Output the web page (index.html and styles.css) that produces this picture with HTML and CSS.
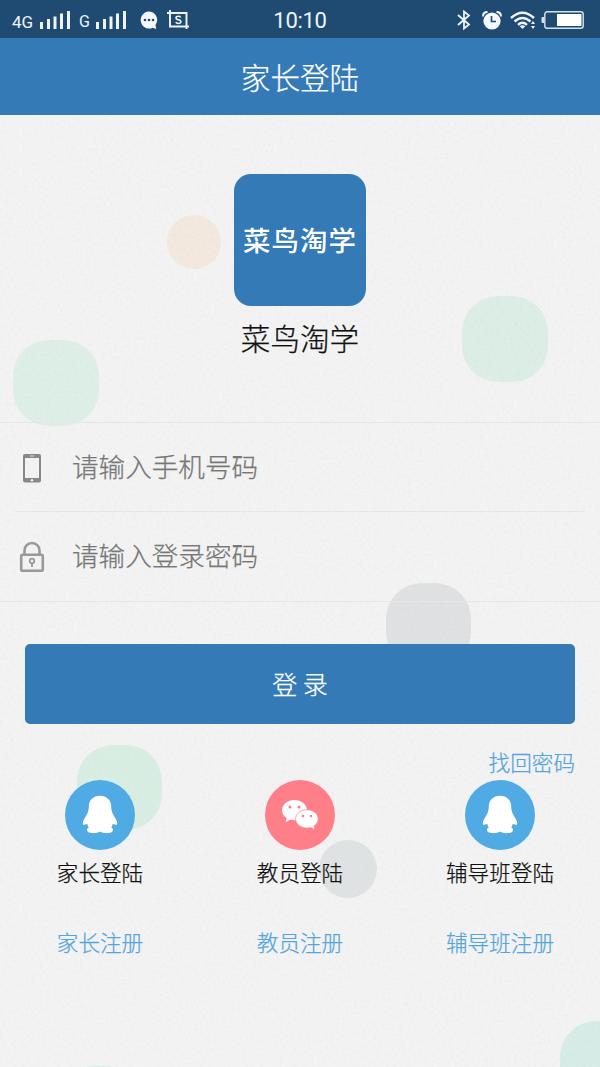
FILE: index.html
```
<!DOCTYPE html>
<html lang="zh-CN">
<head>
<meta charset="utf-8">
<title>家长登陆</title>
<link rel="stylesheet" href="styles.css">
</head>
<body>
<svg class="backdrop" width="600" height="1067" viewBox="0 0 600 1067" aria-hidden="true">
  <defs>
    <filter id="paper" x="0" y="0" width="100%" height="100%">
      <feTurbulence type="fractalNoise" baseFrequency="0.35" numOctaves="2" seed="4"/>
      <feColorMatrix values="0 0 0 0 0.45  0 0 0 0 0.45  0 0 0 0 0.45  0.16 0 0 0 -0.065"/>
    </filter>
  </defs>
  <circle cx="194" cy="242" r="27" fill="#f3e9de"/>
  <rect x="462" y="296" width="86" height="86" rx="36" fill="#dceee6"/>
  <rect x="13" y="340" width="86" height="86" rx="36" fill="#deefe7"/>
  <rect x="386" y="583" width="85" height="85" rx="36" fill="#dfe1e3"/>
  <rect x="77" y="745" width="85" height="85" rx="36" fill="#d9eee2"/>
  <circle cx="348" cy="869" r="29" fill="#e0e3e3"/>
  <rect x="560" y="1021" width="86" height="86" rx="36" fill="#d7ece7"/>
  <rect x="57" y="1066" width="86" height="86" rx="38" fill="#d5ede4"/>
  <rect width="600" height="1067" filter="url(#paper)"/>
</svg>
<div class="screen">
  <div class="status">
    <div class="status-left">
      <span class="net">4G</span>
      <svg class="bars" width="31" height="19" viewBox="0 0 31 19" fill="#eef4fa"><path d="M0 12h3v7H0zM7 9h3v10H7zM13.500 6.500h3V19h-3zM20 3.500h3V19h-3zM27 1h3v18h-3z"/></svg>
      <span class="net net-g">G</span>
      <svg class="bars" width="31" height="19" viewBox="0 0 31 19" fill="#eef4fa"><path d="M0 12h3v7H0zM7 9h3v10H7zM13.500 6.500h3V19h-3zM20 3.500h3V19h-3zM27 1h3v18h-3z"/></svg>
      <svg class="chat" width="18" height="19" viewBox="0 0 18 19"><path d="M9 .5a8.500 8.500 0 1 0 3.800 16.200L16.200 18l-.7-4A8.500 8.500 0 0 0 9 .5z" fill="#f4f8fc"/><g fill="#1f4b73"><circle cx="5" cy="9" r="1.300"/><circle cx="9" cy="9" r="1.300"/><circle cx="13" cy="9" r="1.300"/></g></svg>
      <svg class="crop" width="22" height="20" viewBox="0 0 22 20" fill="none" stroke="#eef4fa" stroke-width="1.900"><path d="M0 3h19.500v16M3 0v16.500h19"/><path d="M13.700 7.300C13.200 6.500 12.400 6.200 11.400 6.200c-3.200 0-3.200 3.200 0 3.600 3.300.4 3.200 3.700 0 3.700-1.200 0-2.200-.5-2.600-1.500" stroke-width="1.600"/></svg>
    </div>
    <div class="clock">10:10</div>
    <div class="status-right">
      <svg width="14" height="20" viewBox="0 0 14 20" fill="none" stroke="#eef4fa" stroke-width="1.800"><path d="M1 5l11 9.500-5 4V1.500l5 4L1 15"/></svg>
      <svg class="alarm" width="20" height="19" viewBox="0 0 20 19"><circle cx="10" cy="10" r="8.600" fill="#f4f8fc"/><path d="M1 5.500C1 2.500 3 1 5.500 1M19 5.500C19 2.500 17 1 14.500 1" stroke="#f4f8fc" stroke-width="1.900" fill="none"/><path d="M9.500 5v5.500H14" fill="none" stroke="#1f4b73" stroke-width="1.600"/></svg>
      <svg class="wifi" width="27" height="19" viewBox="0 0 27 19" fill="none" stroke="#eef4fa" stroke-width="2.400"><path d="M1 7Q12.500-3.500 24 7M4.500 10.500q8-7 16 0M8 13.800q4.500-4 9 0"/><path d="M9.700 15.200q2.800-2 5.600 0L12.500 18z" fill="#eef4fa" stroke="none"/><path d="M21 13l2-3 2 3zM21 15h4l-2 3z" fill="#eef4fa" stroke="none"/></svg>
      <svg class="battery" width="43" height="18" viewBox="0 0 43 18"><rect x="3.800" y=".8" width="38.400" height="16.400" rx="2.500" fill="none" stroke="#d8e2eb" stroke-width="1.400"/><path d="M3 6H1.500Q.5 6 .5 7v4q0 1 1 1H3z" fill="#d8e2eb"/><path d="M16 3h24.500v12H16z" fill="#fff"/></svg>
    </div>
  </div>
  <header class="title">家长登陆</header>
  <main>
    <section class="brand">
      <div class="logo">菜鸟淘学</div>
      <div class="name">菜鸟淘学</div>
    </section>
    <form class="fields">
      <label class="field">
        <svg class="field-icon" width="26" height="32" viewBox="0 0 26 32"><path fill-rule="evenodd" d="M6 2h14q2 0 2 2v24.500q0 2-2 2H6q-2 0-2-2V4q0-2 2-2zM6 6v20h14V6z" fill="#888"/><path d="M11 4h4" stroke="#ddd"/><circle cx="13" cy="28.200" r="1.300" fill="#f1f1f1"/></svg>
        <span>请输入手机号码</span>
      </label>
      <label class="field">
        <svg class="field-icon" width="26" height="32" viewBox="0 0 26 32" fill="none" stroke="#999"><rect x="2.200" y="13.700" width="21.600" height="16" rx="1.500" stroke-width="2.600"/><path d="M5.500 13V9.500a7.500 7.500 0 0 1 15 0V13" stroke-width="2.600"/><circle cx="13" cy="20" r="2.300" stroke-width="1.700"/><path d="M13 22v4" stroke-width="1.800"/></svg>
        <span>请输入登录密码</span>
      </label>
    </form>
    <div class="submit">登 录</div>
    <div class="recover">找回密码</div>
    <nav class="accounts">
      <div class="account">
        <div class="avatar"><svg width="70" height="70" viewBox="0 0 70 70"><path id="penguin" d="M35 15.700c-6.500 0-11.200 4.300-11.200 11 0 2.800-.6 5-1.800 7.500-2.200 3.800-4.200 6.300-4.200 9.300 0 1.600 1.200 1.500 2.200.9l2.300-.5c.2 1.300.7 2.400 1.500 3.500-2.200.8-2.400 3-.8 4.600 2.600 1.700 9.200 1.400 12-.4 2.800 1.800 9.400 2.100 12 .4 1.600-1.600 1.400-3.800-.8-4.600.8-1.100 1.300-2.200 1.500-3.500l2.300.5c1 .6 2.200.7 2.200-.9 0-3-2-5.500-4.200-9.300-1.200-2.500-1.800-4.700-1.800-7.500 0-6.700-4.700-11-11.200-11z" fill="#fff"/></svg></div>
        <div class="login">家长登陆</div>
        <div class="register">家长注册</div>
      </div>
      <div class="account">
        <div class="avatar avatar-wechat"><svg width="70" height="70" viewBox="0 0 70 70"><path d="M29.500 20C22.500 20 17 24.600 17 30.200c0 3.200 1.700 5.900 4.600 7.800l-.8 4.200 4.500-2.600c1.300.5 2.700.7 4.200.7C36.400 40.300 42 35.800 42 30.200S36.400 20 29.500 20z" fill="#fff"/><path d="M42 29.700c6.300 0 11.200 4.100 11.200 9.200 0 2.900-1.600 5.400-4.100 7.100l.6 3.700-4-2.300c-1.100.4-2.400.6-3.700.6-6.300 0-11.400-4.100-11.400-9.100S35.700 29.700 42 29.700z" fill="#fff" stroke="#ff8790" stroke-width=".8"/><g fill="#ff7f89"><circle cx="25" cy="27" r="1.500"/><circle cx="34" cy="27" r="1.500"/><circle cx="38" cy="36" r="1.300"/><circle cx="46" cy="36" r="1.300"/></g></svg></div>
        <div class="login">教员登陆</div>
        <div class="register">教员注册</div>
      </div>
      <div class="account">
        <div class="avatar"><svg width="70" height="70" viewBox="0 0 70 70"><use href="#penguin"/></svg></div>
        <div class="login">辅导班登陆</div>
        <div class="register">辅导班注册</div>
      </div>
    </nav>
  </main>
</div>
</body>
</html>
```
FILE: styles.css
```
* { box-sizing: border-box; }
body {
  margin: 0;
  background: #f3f3f3;
  font-family: "Noto Sans CJK SC", sans-serif;
  font-weight: 300;
  color: #111;
  -webkit-text-stroke: 0.25px currentColor;
}
svg { display: block; flex: none; }
.backdrop { position: absolute; top: 0; left: 0; z-index: -1; }
.screen { width: 600px; height: 1067px; overflow: hidden; }

.status {
  display: grid;
  grid-template-columns: 1fr auto 1fr;
  height: 38px;
  align-items: center;
  background: #1f4b73;
  color: #eef4fa;
  font-family: Roboto, sans-serif;
  font-weight: 400;
  -webkit-text-stroke: 0;
}
.status-left, .status-right { display: flex; align-items: center; }
.status-left { padding-left: 12px; }
.status-right { justify-content: flex-end; padding-right: 16px; }
.net { width: 28px; padding-top: 4px; font-size: 17px; line-height: 18px; }
.net-g { width: 17px; margin-left: 8px; font-size: 16px; }
.bars { margin-bottom: 2px; }
.chat { margin-left: 13px; }
.crop { margin-left: 9px; }
.clock { font-size: 22px; line-height: 38px; padding-top: 2px; letter-spacing: -0.3px; }
.alarm { margin-left: 11px; }
.wifi { margin-left: 8px; }
.battery { margin-left: 4px; }

.title {
  height: 77px;
  background: #337ab7;
  color: #fff;
  font-size: 29.600px;
  line-height: 78px;
  text-align: center;
}
.brand { display: flex; flex-direction: column; align-items: center; padding-top: 59px; }
.logo {
  width: 132px;
  height: 132px;
  border-radius: 17px;
  background: #337ab7;
  color: #fff;
  font-size: 27.500px;
  font-weight: 500;
  letter-spacing: 1px;
  line-height: 130px;
  text-align: center;
  -webkit-text-stroke: 0;
}
.name { margin-top: 9px; font-size: 29.600px; line-height: 46px; }

.fields { margin-top: 61px; border-top: 1px solid #e6e6e6; border-bottom: 1px solid #e6e6e6; }
.field {
  display: flex;
  align-items: center;
  height: 88px;
  margin: 0 15px;
  padding-left: 4px;
  color: #777;
  font-size: 26.600px;
  line-height: 40px;
}
.field + .field { height: 90px; border-top: 1px solid #e6e6e6; }
.field-icon { margin-top: 1px; }
.field span { margin-left: 27px; padding-bottom: 3px; }

.submit {
  height: 80px;
  margin: 41.500px 25px 0;
  border-radius: 5px;
  background: #337ab7;
  color: #fff;
  font-size: 25px;
  line-height: 78px;
  text-align: center;
}
.recover { height: 56.500px; padding: 21.500px 25px 0; color: #55a5dc; font-size: 21.600px; line-height: 34px; text-align: right; }
.accounts { display: grid; grid-template-columns: repeat(3, 1fr); }
.account { display: flex; flex-direction: column; align-items: center; font-size: 21.600px; line-height: 32px; }
.avatar { width: 70px; height: 70px; border-radius: 50%; background: #50abe4; }
.avatar-wechat { background: #ff7f89; }
.login { margin-top: 6px; }
.register { margin-top: 38px; color: #55a5dc; }
```
